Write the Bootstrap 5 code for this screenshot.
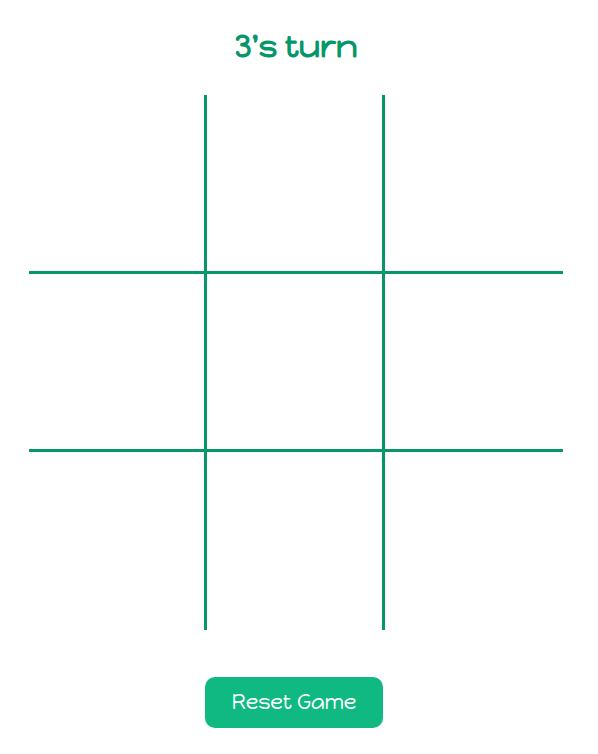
<!DOCTYPE html>
<html lang="en">
<head>
<meta charset="utf-8">
<meta name="viewport" content="width=device-width, initial-scale=1">
<title>Tic Tac Toe</title>
<link href="https://cdn.jsdelivr.net/npm/bootstrap@5.3.0/dist/css/bootstrap.min.css" rel="stylesheet">
<style>
  body { font-family: "Happy Monkey", Quicksand, Inter, sans-serif; background: #fff; }
  .game { max-width: 598px; padding: 26px 35px 26px 29px; }
  .turn { color: #059669; font-size: 32px; line-height: 40px; font-weight: 700; margin-bottom: 29px; }
  .board { display: grid; grid-template-columns: repeat(3, 1fr); }
  .cell { aspect-ratio: 1; padding: 0; border: 0 solid #059669; background: transparent; color: #059669; font-size: 64px; }
  .cell:not(:nth-child(3n)) { border-right-width: 3px; }
  .cell:nth-child(-n+6) { border-bottom-width: 3px; }
  .cell:nth-child(-n+3) { aspect-ratio: 178 / 179; }
  .reset { --bs-btn-color: #fff; --bs-btn-bg: #10b981; --bs-btn-hover-color: #fff; --bs-btn-hover-bg: #059669; --bs-btn-border-width: 0;
    font-size: 21px; line-height: 27px; font-weight: 400; padding: 11px 24px 13px; border-radius: 10px; min-width: 178px; margin: 47px 4px 0 0; }
</style>
<script src="https://cdn.jsdelivr.net/npm/bootstrap@5.3.0/dist/js/bootstrap.bundle.min.js" defer></script>
</head>
<body>
<main class="game mx-auto text-center">
  <h1 class="turn">3's turn</h1>
  <div class="board" role="group" aria-label="Game board">
    <button type="button" class="cell" aria-label="Row 1, column 1"></button>
    <button type="button" class="cell" aria-label="Row 1, column 2"></button>
    <button type="button" class="cell" aria-label="Row 1, column 3"></button>
    <button type="button" class="cell" aria-label="Row 2, column 1"></button>
    <button type="button" class="cell" aria-label="Row 2, column 2"></button>
    <button type="button" class="cell" aria-label="Row 2, column 3"></button>
    <button type="button" class="cell" aria-label="Row 3, column 1"></button>
    <button type="button" class="cell" aria-label="Row 3, column 2"></button>
    <button type="button" class="cell" aria-label="Row 3, column 3"></button>
  </div>
  <button type="button" class="btn reset">Reset Game</button>
</main>
</body>
</html>
